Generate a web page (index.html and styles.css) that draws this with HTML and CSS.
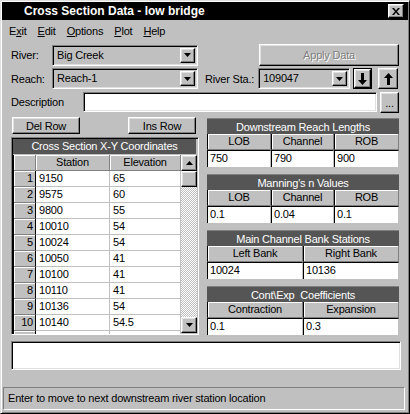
FILE: index.html
```html
<!DOCTYPE html>
<html>
<head>
<meta charset="utf-8">
<link rel="stylesheet" href="styles.css">
</head>
<body>
<div class="window">
  <div class="titlebar">
    <span class="title">Cross Section Data - low bridge</span>
    <span class="close-btn raised"><svg width="8" height="7" viewBox="0 0 8 7"><path d="M0 0h2l2 2.5L6 0h2L5 3.5 8 7H6L4 4.5 2 7H0l3-3.5z" fill="#000"/></svg></span>
  </div>
  <div class="menubar">
    <span>E<u>x</u>it</span><span><u>E</u>dit</span><span><u>O</u>ptions</span><span><u>P</u>lot</span><span><u>H</u>elp</span>
  </div>
  <div class="content">
    <div class="row r1">
      <span class="label">River:</span>
      <div class="combo w-main"><span class="combo-text">Big Creek</span><span class="drop-btn raised"><svg width="7" height="4" viewBox="0 0 7 4"><path d="M0 0h7L3.5 4z" fill="#000"/></svg></span></div>
      <div class="btn raised apply">Apply Data</div>
    </div>
    <div class="row r2">
      <span class="label">Reach:</span>
      <div class="combo w-main"><span class="combo-text">Reach-1</span><span class="drop-btn raised"><svg width="7" height="4" viewBox="0 0 7 4"><path d="M0 0h7L3.5 4z" fill="#000"/></svg></span></div>
      <span class="label sta">River Sta.:</span>
      <div class="combo w-sta"><span class="combo-text">109047</span><span class="drop-btn raised"><svg width="7" height="4" viewBox="0 0 7 4"><path d="M0 0h7L3.5 4z" fill="#000"/></svg></span></div>
      <div class="arrow-btn default"><div class="raised inner"><svg width="9" height="12" viewBox="0 0 9 12"><path d="M3 0h3v7h3L4.5 12 0 7h3z" fill="#000"/></svg></div></div>
      <div class="arrow-btn raised up"><svg width="9" height="12" viewBox="0 0 9 12"><path d="M3 12h3V5h3L4.5 0 0 5h3z" fill="#000"/></svg></div>
    </div>
    <div class="row r3">
      <span class="label desc">Description</span>
      <div class="textbox desc-box"></div>
      <div class="btn raised dots">...</div>
    </div>
    <div class="main">
      <div class="left">
        <div class="btn-row">
          <div class="btn raised small">Del Row</div>
          <div class="btn raised small">Ins Row</div>
        </div>
        <div class="table-box">
          <div class="dark-head">Cross Section X-Y Coordinates</div>
          <div class="table-body">
            <div class="grid">
              <div class="ch"></div><div class="ch">Station</div><div class="ch">Elevation</div>
              <div class="rn">1</div><div class="dc">9150</div><div class="dc">65</div>
              <div class="rn">2</div><div class="dc">9575</div><div class="dc">60</div>
              <div class="rn">3</div><div class="dc">9800</div><div class="dc">55</div>
              <div class="rn">4</div><div class="dc">10010</div><div class="dc">54</div>
              <div class="rn">5</div><div class="dc">10024</div><div class="dc">54</div>
              <div class="rn">6</div><div class="dc">10050</div><div class="dc">41</div>
              <div class="rn">7</div><div class="dc">10100</div><div class="dc">41</div>
              <div class="rn">8</div><div class="dc">10110</div><div class="dc">41</div>
              <div class="rn">9</div><div class="dc">10136</div><div class="dc">54</div>
              <div class="rn">10</div><div class="dc">10140</div><div class="dc">54.5</div>
              <div class="rn"></div><div class="dc"></div><div class="dc"></div>
            </div>
            <div class="scrollbar">
              <div class="sb-btn raised"><svg width="7" height="4" viewBox="0 0 7 4"><path d="M0 4h7L3.5 0z" fill="#000"/></svg></div>
              <div class="sb-thumb raised"></div>
              <div class="sb-track"></div>
              <div class="sb-btn raised"><svg width="7" height="4" viewBox="0 0 7 4"><path d="M0 0h7L3.5 4z" fill="#000"/></svg></div>
            </div>
          </div>
        </div>
      </div>
      <div class="right">
        <div class="panel">
          <div class="dark-head">Downstream Reach Lengths</div>
          <div class="pgrid three">
            <div class="ph">LOB</div><div class="ph">Channel</div><div class="ph">ROB</div>
            <div class="pi">750</div><div class="pi">790</div><div class="pi">900</div>
          </div>
        </div>
        <div class="panel">
          <div class="dark-head">Manning's n Values</div>
          <div class="pgrid three">
            <div class="ph">LOB</div><div class="ph">Channel</div><div class="ph">ROB</div>
            <div class="pi">0.1</div><div class="pi">0.04</div><div class="pi">0.1</div>
          </div>
        </div>
        <div class="panel">
          <div class="dark-head">Main Channel Bank Stations</div>
          <div class="pgrid two">
            <div class="ph">Left Bank</div><div class="ph">Right Bank</div>
            <div class="pi">10024</div><div class="pi">10136</div>
          </div>
        </div>
        <div class="panel">
          <div class="dark-head">Cont\Exp&nbsp; Coefficients</div>
          <div class="pgrid two">
            <div class="ph">Contraction</div><div class="ph">Expansion</div>
            <div class="pi">0.1</div><div class="pi">0.3</div>
          </div>
        </div>
      </div>
    </div>
    <div class="textbox notes"></div>
  </div>
  <div class="status">Enter to move to next downstream river station location</div>
</div>
</body>
</html>
```
FILE: styles.css
```css
* { box-sizing: border-box; }
body {
  margin: 0;
  background: #c0c0c0;
  font-family: "Liberation Sans", Arial, sans-serif;
  font-size: 11px;
  letter-spacing: -0.2px;
  color: #000;
}
.window {
  width: 410px;
  height: 414px;
  background: #c0c0c0;
  border: 1px solid;
  border-color: #dfdfdf #000 #000 #dfdfdf;
  box-shadow: inset 1px 1px #fff, inset -1px -1px #808080;
  padding: 1px;
  display: flex;
  flex-direction: column;
}
.raised {
  background: #c0c0c0;
  border: 1px solid;
  border-color: #fff #000 #000 #fff;
  box-shadow: inset -1px -1px #808080, inset 1px 1px #dfdfdf;
}
.titlebar {
  height: 18px;
  background: #000;
  display: flex;
  align-items: center;
  padding-left: 22px;
  color: #fff;
}
.title {
  font-weight: bold;
  font-size: 12px;
  letter-spacing: 0;
}
.close-btn {
  margin-left: auto;
  margin-right: 4px;
  width: 16px;
  height: 14px;
  display: flex;
  align-items: center;
  justify-content: center;
}
.menubar {
  height: 19px;
  display: flex;
  align-items: center;
  gap: 11px;
  padding-left: 7px;
  padding-top: 2px;
}
.content {
  flex: 1;
  display: flex;
  flex-direction: column;
  padding: 0 9px;
}
.row {
  display: flex;
  align-items: center;
}
.r1 { margin-top: 5px; height: 22px; }
.r2 { margin-top: 2px; height: 21px; }
.r3 { margin-top: 3px; height: 20px; }
.label { width: 41px; }
.label.sta { width: auto; margin-left: 7px; margin-right: 4px; }
.label.desc { width: 72px; }
.combo {
  display: flex;
  align-items: stretch;
  height: 21px;
  background: #c0c0c0;
  border: 1px solid;
  border-color: #808080 #fff #fff #808080;
  box-shadow: inset 1px 1px #000, inset -1px -1px #dfdfdf;
  padding: 2px;
}
.combo-text {
  padding-left: 2px;
  line-height: 15px;
  flex: 1;
}
.drop-btn {
  width: 15px;
  display: flex;
  align-items: center;
  justify-content: center;
}
.w-main { width: 146px; }
.w-sta { width: 92px; }
.btn {
  display: flex;
  align-items: center;
  justify-content: center;
}
.apply {
  margin-left: auto;
  width: 140px;
  height: 22px;
  color: #808080;
  text-shadow: 1px 1px #fff;
}
.arrow-btn {
  height: 21px;
  display: flex;
  align-items: center;
  justify-content: center;
}
.arrow-btn.default {
  margin-left: 3px;
  width: 19px;
  border: 1px solid #000;
}
.arrow-btn.default .inner {
  width: 100%;
  height: 100%;
  display: flex;
  align-items: center;
  justify-content: center;
}
.arrow-btn.up {
  margin-left: 6px;
  width: 20px;
}
.textbox {
  background: #fff;
  border: 1px solid;
  border-color: #808080 #fff #fff #808080;
  box-shadow: inset 1px 1px #000, inset -1px -1px #dfdfdf;
}
.desc-box {
  width: 294px;
  height: 20px;
}
.dots {
  margin-left: 3px;
  width: 19px;
  height: 21px;
  align-items: flex-end;
  padding-bottom: 3px;
}
.main {
  margin-top: 5px;
  height: 219px;
  display: flex;
  gap: 8px;
}
.left {
  width: 188px;
  display: flex;
  flex-direction: column;
}
.btn-row {
  display: flex;
  justify-content: space-between;
  padding-left: 1px;
  padding-right: 3px;
}
.small {
  width: 68px;
  height: 17px;
}
.table-box {
  margin-top: 3px;
  height: 198px;
  border: 1px solid;
  border-color: #808080 #fff #fff #808080;
  box-shadow: inset 1px 1px #000;
  padding: 1px 0 0 1px;
  display: flex;
  flex-direction: column;
}
.dark-head {
  height: 15px;
  background: #555;
  color: #fff;
  text-align: center;
  line-height: 15px;
  flex: none;
}
.table-box .dark-head { margin-right: 2px; }
.table-body {
  display: flex;
  flex: 1;
  overflow: hidden;
  border-top: 1px solid #c0c0c0;
}
.grid {
  display: grid;
  grid-template-columns: 22px 74px 71px;
  grid-template-rows: 16px repeat(11, 16px);
  border-left: 1px solid #000;
  background: #fff;
  align-content: start;
}
.ch, .rn {
  background: #c0c0c0;
  border-right: 1px solid #808080;
  border-bottom: 1px solid #808080;
  box-shadow: inset 1px 1px #fff;
  line-height: 15px;
}
.ch { text-align: center; }
.rn { text-align: right; padding-right: 2px; border-right-color: #000; }
.dc {
  border-right: 1px solid #c0c0c0;
  border-bottom: 1px solid #c0c0c0;
  padding-left: 3px;
  line-height: 15px;
}
.scrollbar {
  width: 16px;
  display: flex;
  flex-direction: column;
  padding-bottom: 1px;
}
.sb-btn {
  height: 16px;
  flex: none;
  display: flex;
  align-items: center;
  justify-content: center;
}
.sb-thumb { height: 16px; flex: none; }
.sb-track {
  flex: 1;
  background: repeating-conic-gradient(#c0c0c0 0 25%, #fff 0 50%) 0 0 / 2px 2px;
}
.right {
  width: 192px;
  margin-top: 1px;
  display: flex;
  flex-direction: column;
  gap: 7px;
}
.panel .dark-head {
  height: 16px;
  line-height: 16px;
  border-top: 1px solid #808080;
}
.pgrid {
  display: grid;
  grid-template-rows: 16px 17px;
}
.pgrid.three { grid-template-columns: 64px 63px 65px; }
.pgrid.two { grid-template-columns: 96px 96px; }
.ph {
  background: #c0c0c0;
  border-left: 1px solid #000;
  border-right: 1px solid #808080;
  border-bottom: 1px solid #808080;
  box-shadow: inset 1px 1px #fff;
  text-align: center;
  line-height: 15px;
}
.pi {
  background: #fff;
  border-top: 1px solid #000;
  border-left: 1px solid #000;
  border-right: 1px solid #c0c0c0;
  padding-left: 2px;
  line-height: 15px;
}
.notes {
  margin-top: 5px;
  height: 29px;
  width: 390px;
}
.status {
  margin: auto 3px 2px 1px;
  height: 23px;
  border: 1px solid;
  border-color: #808080 #fff #fff #808080;
  padding-left: 4px;
  line-height: 21px;
}
```
